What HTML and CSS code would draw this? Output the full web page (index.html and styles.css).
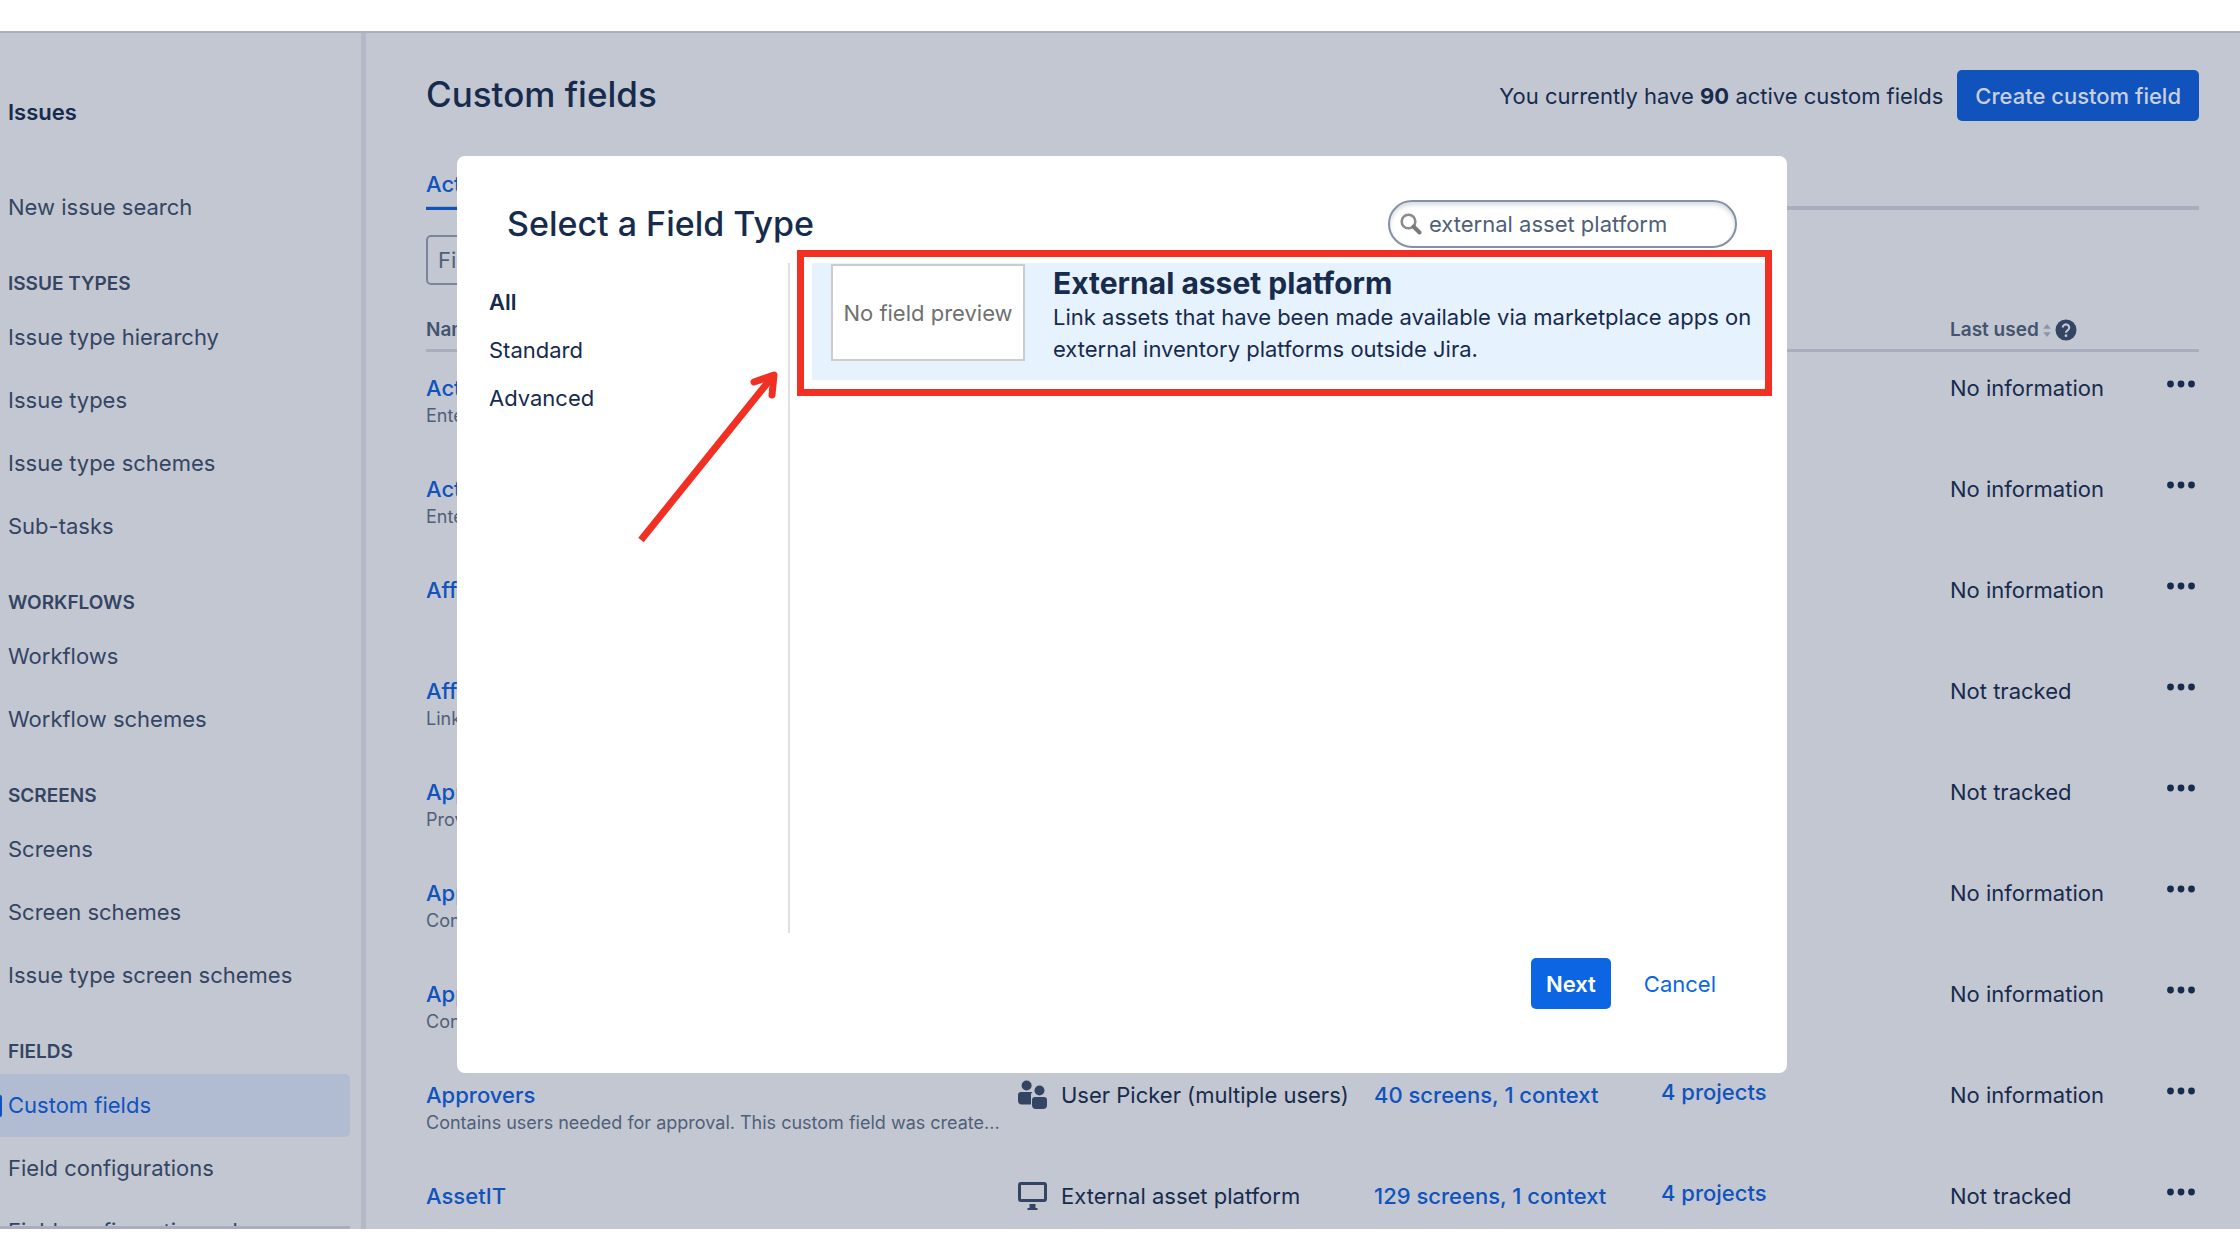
FILE: index.html
```html
<!DOCTYPE html>
<html lang="en">
<head>
<meta charset="utf-8">
<title>Custom fields</title>
<link rel="stylesheet" href="styles.css">
</head>
<body>
<svg class="sprite" aria-hidden="true">
  <symbol id="dots" viewBox="0 0 28 8"><circle cx="3.5" cy="4" r="3.4"/><circle cx="14" cy="4" r="3.4"/><circle cx="24.5" cy="4" r="3.4"/></symbol>
  <symbol id="users" viewBox="0 0 30 30"><ellipse cx="8.6" cy="5.5" rx="5" ry="5"/><path d="M3 12h11.500a3 3 0 0 0-1.500 3v9.500H4a4 4 0 0 1-4-4V15a3 3 0 0 1 3-3z"/><circle cx="21.500" cy="10.500" r="5"/><path d="M17 17h9a3 3 0 0 1 3 3v5a4 4 0 0 1-4 4h-7a4 4 0 0 1-4-4v-5a3 3 0 0 1 3-3z"/></symbol>
  <symbol id="screen" viewBox="0 0 30 30"><path fill-rule="evenodd" d="M3 1h23a3 3 0 0 1 3 3v14a3 3 0 0 1-3 3H3a3 3 0 0 1-3-3V4a3 3 0 0 1 3-3zm0 3v14h23V4z"/><path d="M11.500 23h6v4h2v2h-10v-2h2z"/></symbol>
</svg>
<div class="app">
  <nav class="sidebar" aria-label="Issues administration">
    <h2 class="sidebar-title">Issues</h2>
    <a class="nav-item" href="#">New issue search</a>
    <h3 class="nav-heading">ISSUE TYPES</h3>
    <a class="nav-item" href="#">Issue type hierarchy</a>
    <a class="nav-item" href="#">Issue types</a>
    <a class="nav-item" href="#">Issue type schemes</a>
    <a class="nav-item" href="#">Sub-tasks</a>
    <h3 class="nav-heading">WORKFLOWS</h3>
    <a class="nav-item" href="#">Workflows</a>
    <a class="nav-item" href="#">Workflow schemes</a>
    <h3 class="nav-heading">SCREENS</h3>
    <a class="nav-item" href="#">Screens</a>
    <a class="nav-item" href="#">Screen schemes</a>
    <a class="nav-item" href="#">Issue type screen schemes</a>
    <h3 class="nav-heading">FIELDS</h3>
    <a class="nav-item selected" href="#" aria-current="page">Custom fields</a>
    <a class="nav-item" href="#">Field configurations</a>
    <a class="nav-item" href="#">Field configuration schemes</a>
  </nav>
  <main class="main">
    <header class="page-header">
      <h1 class="page-title">Custom fields</h1>
      <p class="summary">You currently have <strong>90</strong> active custom fields</p>
      <button class="create" type="button">Create custom field</button>
    </header>
    <div class="tabs"><a class="tab" href="#">Active</a></div>
    <input class="filter" type="text" placeholder="Filter" aria-label="Filter by name">
    <table class="fields">
      <colgroup><col><col class="col-type"><col class="col-screens"><col class="col-projects"><col class="col-used"><col class="col-actions"></colgroup>
      <thead>
        <tr><th>Name</th><th></th><th></th><th></th>
          <th><span class="sortable">Last used
            <svg class="sort" viewBox="0 0 8 14" aria-hidden="true"><path d="M4 0l4 5H0zM4 14l4-5H0z"/></svg>
            <svg class="help" viewBox="0 0 22 22" aria-hidden="true"><circle cx="11" cy="11" r="10.500"/><path d="M7.800 8.600a3.200 3.200 0 1 1 5 2.600c-1.200.8-1.800 1.300-1.800 2.600" fill="none" stroke="#c3c7d2" stroke-width="2.200"/><circle cx="11" cy="16.700" r="1.400" fill="#c3c7d2"/></svg></span></th>
          <th></th></tr>
      </thead>
      <tbody>
        <tr><td><a href="#">Actor</a><small>Enter</small></td><td></td><td></td><td></td><td>No information</td><td class="actions"><button type="button" aria-label="Actions"><svg><use href="#dots"/></svg></button></td></tr>
        <tr><td><a href="#">Actual start</a><small>Enter the start</small></td><td></td><td></td><td></td><td>No information</td><td class="actions"><button type="button" aria-label="Actions"><svg><use href="#dots"/></svg></button></td></tr>
        <tr><td><a href="#">Affected hardware</a></td><td></td><td></td><td></td><td>No information</td><td class="actions"><button type="button" aria-label="Actions"><svg><use href="#dots"/></svg></button></td></tr>
        <tr><td><a href="#">Affected services</a><small>Link services</small></td><td></td><td></td><td></td><td>Not tracked</td><td class="actions"><button type="button" aria-label="Actions"><svg><use href="#dots"/></svg></button></td></tr>
        <tr><td><a href="#">Approvals</a><small>Provides approvals</small></td><td></td><td></td><td></td><td>Not tracked</td><td class="actions"><button type="button" aria-label="Actions"><svg><use href="#dots"/></svg></button></td></tr>
        <tr><td><a href="#">Approver groups</a><small>Contains groups</small></td><td></td><td></td><td></td><td>No information</td><td class="actions"><button type="button" aria-label="Actions"><svg><use href="#dots"/></svg></button></td></tr>
        <tr><td><a href="#">Approver list</a><small>Contains users</small></td><td></td><td></td><td></td><td>No information</td><td class="actions"><button type="button" aria-label="Actions"><svg><use href="#dots"/></svg></button></td></tr>
        <tr><td><a href="#">Approvers</a><small>Contains users needed for approval. This custom field was create...</small></td><td><span class="type"><svg><use href="#users"/></svg>User Picker (multiple users)</span></td><td><a href="#">40 screens, 1 context</a></td><td class="projects"><a href="#">4 projects</a></td><td>No information</td><td class="actions"><button type="button" aria-label="Actions"><svg><use href="#dots"/></svg></button></td></tr>
        <tr><td><a href="#">AssetIT</a></td><td><span class="type"><svg><use href="#screen"/></svg>External asset platform</span></td><td><a href="#">129 screens, 1 context</a></td><td class="projects"><a href="#">4 projects</a></td><td>Not tracked</td><td class="actions"><button type="button" aria-label="Actions"><svg><use href="#dots"/></svg></button></td></tr>
      </tbody>
    </table>
  </main>
  <div class="blanket">
    <section class="dialog" role="dialog" aria-labelledby="dialog-title">
      <header class="dialog-header">
        <h2 class="dialog-title" id="dialog-title">Select a Field Type</h2>
        <label class="search">
          <svg viewBox="0 0 22 22" aria-hidden="true"><circle cx="8.500" cy="8.500" r="6.800" fill="none" stroke="#8b8b8b" stroke-width="2.600"/><path d="M13.500 13.500l6 6" stroke="#7a7a7a" stroke-width="4" stroke-linecap="round"/></svg>
          <input type="text" value="external asset platform" aria-label="Search field types">
        </label>
      </header>
      <div class="dialog-body">
        <nav class="categories" aria-label="Categories">
          <a class="current" href="#">All</a>
          <a href="#">Standard</a>
          <a href="#">Advanced</a>
        </nav>
        <div class="results">
          <article class="field-type">
            <div class="preview">No field preview</div>
            <div class="field-text">
              <h3>External asset platform</h3>
              <p>Link assets that have been made available via marketplace apps on external inventory platforms outside Jira.</p>
            </div>
            <span class="highlight"></span>
            <svg class="arrow" viewBox="0 0 150 180" aria-hidden="true"><path d="M7 172L139 8"/><path class="head" d="M120 14L140 7L138 27"/></svg>
          </article>
        </div>
      </div>
      <footer class="dialog-footer">
        <button class="next" type="button">Next</button>
        <button class="cancel" type="button">Cancel</button>
      </footer>
    </section>
  </div>
</div>
</body>
</html>
```

FILE: styles.css
```css
* { box-sizing: border-box; }
body {
  margin: 0;
  height: 100vh;
  padding: 31px 0;
  background: #fff;
  color: #172b4d;
  font: 22px/32px Inter, "Liberation Sans", sans-serif;
}
h1, h2, h3, p { margin: 0; }
a { color: #1053bd; text-decoration: none; }
button, input { font: inherit; color: inherit; border: 0; background: none; padding: 0; }
.sprite { position: absolute; width: 0; height: 0; }

.app {
  position: relative;
  display: flex;
  height: 100%;
  overflow: hidden;
  background: #c3c7d2;
  border-top: 2px solid #a9afbf;
}

.sidebar {
  position: relative;
  flex: none;
  width: 366px;
  padding: 63px 16px 0 0;
  overflow: hidden;
  border-right: 5px solid #b5b9c7;
}
.sidebar::after {
  content: "";
  position: absolute;
  left: 0;
  right: 11px;
  bottom: 0;
  height: 3px;
  background: #a9aebf;
}
.sidebar-title { padding: 0 8px 48px; font-size: 22px; line-height: 32px; font-weight: 600; }
.nav-item {
  display: block;
  margin-right: -5px;
  padding: 15px 8px 16px;
  color: #344563;
  border-radius: 0 5px 5px 0;
}
.nav-item.selected {
  position: relative;
  background: #b1bcd2;
  color: #1053bd;
}
.nav-item.selected::before {
  content: "";
  position: absolute;
  left: 0;
  top: 21px;
  width: 2px;
  height: 22px;
  background: #1053bd;
  border-radius: 0 2px 2px 0;
}
.nav-heading {
  padding: 34px 8px 11px;
  color: #344563;
  font-size: 19px;
  line-height: 22px;
  font-weight: 600;
}

.main { flex: 1; min-width: 0; padding: 37px 41px 0 60px; }
.page-header { display: flex; align-items: center; }
.page-title { flex: 1; margin-top: -4px; font-size: 35px; line-height: 48px; font-weight: 500; }
.summary { margin-right: 14px; }
.summary strong { font-weight: 700; }
.create {
  height: 51px;
  padding: 0 18px;
  border-radius: 5px;
  background: #1053bd;
  color: #c8d0e0;
  font-weight: 500;
}
.tabs { display: flex; margin-top: 47px; border-bottom: 4px solid #a9aebf; }
.tab { margin-bottom: -4px; padding-bottom: 7px; border-bottom: 3px solid #1053bd; font-weight: 500; }
.filter {
  display: block;
  width: 260px;
  height: 50px;
  margin-top: 25px;
  padding: 0 10px;
  border: 2px solid #7b859b;
  border-radius: 5px;
}
.filter::placeholder { color: #505f79; opacity: 1; }

.fields { width: 100%; margin-top: 28px; table-layout: fixed; border-collapse: separate; border-spacing: 0; }
.col-type { width: 356px; }
.col-screens { width: 287px; }
.col-projects { width: 289px; }
.col-used { width: 217px; }
.col-actions { width: 32px; }
.fields th {
  height: 39px;
  padding: 0 0 2px;
  border-bottom: 3px solid #a9aebf;
  color: #44546f;
  font-size: 19px;
  line-height: 30px;
  font-weight: 600;
  text-align: left;
}
.sortable { display: flex; align-items: center; gap: 4px; }
.sort { width: 8px; height: 13px; fill: #8c94a7; }
.help { width: 22px; height: 22px; fill: #344563; }
.fields td { height: 101px; padding: 20px 0 0; vertical-align: top; white-space: nowrap; }
.fields td a { font-weight: 500; }
.fields small { display: block; color: #505f79; font-size: 18px; line-height: 24px; }
.fields td.projects { padding-top: 17px; }
.fields td.actions { padding-top: 16px; }
.actions button { display: block; height: 32px; cursor: pointer; }
.actions svg { display: block; width: 28px; height: 8px; fill: #172b4d; }
.type { display: flex; align-items: center; gap: 13px; }
.type svg { width: 30px; height: 30px; fill: #344563; }

.blanket {
  position: absolute;
  inset: 0;
  display: flex;
  justify-content: center;
  align-items: flex-start;
  padding: 123px 0 0 4px;
}
.dialog {
  width: min(1330px, 94%);
  border-radius: 8px;
  background: #fff;
}
.dialog-header {
  display: flex;
  align-items: center;
  justify-content: space-between;
  padding: 44px 50px 15px;
}
.dialog-title { font-size: 34px; line-height: 48px; font-weight: 500; }
.search {
  display: flex;
  align-items: center;
  gap: 7px;
  width: 349px;
  height: 48px;
  padding: 0 12px 0 10px;
  border: 2px solid #8590a7;
  border-radius: 24px;
  box-shadow: inset 0 3px 4px #d9dbe0;
  color: #505f79;
}
.search svg { flex: none; width: 22px; height: 22px; }
.search input { flex: 1; min-width: 0; outline: 0; }
.dialog-body { display: flex; min-height: 670px; padding-right: 21px; }
.categories {
  flex: none;
  width: 333px;
  display: flex;
  flex-direction: column;
  gap: 16px;
  padding: 23px 32px;
  border-right: 2px solid #dfe1e6;
}
.categories a { color: #172b4d; }
.categories .current { font-weight: 600; }
.results { flex: 1; padding-left: 22px; }
.field-type {
  position: relative;
  display: flex;
  gap: 28px;
  min-height: 117px;
  padding: 1px 8px 14px 19px;
  background: #e7f2ff;
}
.preview {
  flex: none;
  display: flex;
  align-items: center;
  justify-content: center;
  width: 194px;
  height: 97px;
  border: 2px solid #ccc;
  background: #fff;
  color: #707070;
}
.field-text { padding-top: 1px; }
.field-text h3 { font-size: 30px; line-height: 36px; font-weight: 700; }
.highlight {
  position: absolute;
  inset: -13px -6px -16px -15px;
  border: 7px solid #f12f23;
}
.arrow {
  position: absolute;
  left: -178px;
  top: 105px;
  width: 150px;
  height: 180px;
  fill: none;
  stroke: #f12f23;
  stroke-width: 7;
}
.arrow .head { stroke-linecap: round; stroke-linejoin: round; }
.dialog-footer {
  display: flex;
  justify-content: flex-end;
  gap: 33px;
  padding: 25px 71px 64px;
}
.next {
  height: 51px;
  padding: 0 15px;
  border-radius: 5px;
  background: #0c66e4;
  color: #fff;
  font-weight: 600;
}
.cancel { color: #0c66e4; }
```
